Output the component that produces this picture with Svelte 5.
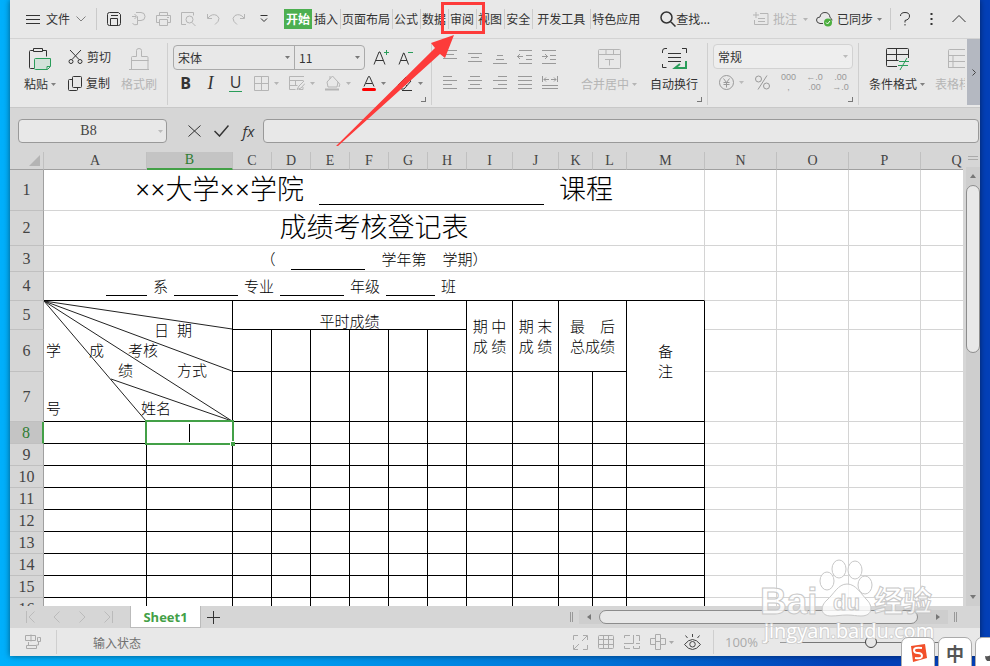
<script>
	let font = '宋体';
	let size = '11';
	let format = '常规';
	let cell = 'B8';
	let formula = '';
	let zoom = 50;

	const tabs = ['插入', '页面布局', '公式', '数据', '审阅', '视图', '安全', '开发工具', '特色应用'];

	const cols = [
		['A', 103], ['B', 86], ['C', 39], ['D', 39], ['E', 39], ['F', 39], ['G', 39], ['H', 39],
		['I', 46], ['J', 46], ['K', 34], ['L', 34], ['M', 78], ['N', 72], ['O', 72], ['P', 72], ['Q', 72]
	];
	const formCols = cols.slice(0, 13);
	const restCols = cols.slice(13);
	const plainRows = [8, 9, 10, 11, 12, 13, 14, 15, 16];

	// w, h, d = main strokes, g = green strokes
	const icons = {
		menu: { w: 14, h: 11, d: 'M0 1.5h14M0 5.5h14M0 9.5h14' },
		chevron: { w: 10, h: 6, d: 'M.5 .5l4.5 4.5 4.5-4.5' },
		save: { w: 14, h: 14, d: 'M.5 2.5q0-2 2-2h9l2 2v9q0 2-2 2h-9q-2 0-2-2zM3.5 13.5v-7h7v7M4 3.5h7' },
		exportpdf: { w: 15, h: 14, d: 'M1 4.5h4M3.5 2l2.5 2.5L3.5 7M5 .5h5q4 0 4 4t-4 4H6.5v4q-3 1-5-1M6.5 8.5v-4' },
		print: { w: 15, h: 14, d: 'M3.5 3.5v-3h8v3M3.5 10.5h-3v-7h14v7h-3M3.5 7.5h8v6h-8zM11 5.5h2' },
		preview: { w: 15, h: 14, d: 'M5 12.5H.5V.5h12v3M8.5 4a3.5 3.5 0 1 1 0 7 3.5 3.5 0 0 1 0-7M11 10.5l3.5 3.5' },
		undo: { w: 13, h: 12, d: 'M.5 1v4.5H5M1 5q4-5 9-2.5 3.5 2.5 1 6L8 11.5' },
		redo: { w: 13, h: 12, d: 'M12.5 1v4.5H8M12 5q-4-5-9-2.5-3.5 2.5-1 6L5 11.5' },
		more: { w: 8, h: 8, d: 'M.5 .5h7M1 3.5l3 3 3-3' },
		search: { w: 16, h: 16, d: 'M6.5 1a5.5 5.5 0 1 1 0 11 5.5 5.5 0 0 1 0-11M10.5 10.5l5 5', s: 1.5 },
		note: { w: 16, h: 14, d: 'M3 0v6M0 3h6M7 1.5h8v11H1.5V8M5 6.5h7M5 9.5h7' },
		question: { w: 10, h: 14, d: 'M.5 4q0-3.5 4.5-3.5T9.5 4 5 8.5v2M5 12v1.5' },
		dots: { w: 3, h: 14, d: 'M1.5 1v2M1.5 6v2M1.5 11v2', s: 2 },
		up: { w: 14, h: 8, d: 'M.5 7L7 .5 13.5 7' },
		paste: {
			w: 22, h: 22, d: 'M4 2.5H1.5q-1 0-1 1v16q0 1 1 1H5M13 2.5h4.5v6M4.5 .5h9v3h-9z',
			g: 'M6.5 10.5h15v8l-3 3h-12q-1 0-1-1v-9q0-1 1-1M21 18.5h-3v3', f: '#d2e2d9'
		},
		cut: { w: 15, h: 14, d: 'M2 0l9 9.5M13 0L4 9.5M3 9.5a2 2 0 1 1 0 4 2 2 0 0 1 0-4M12 9.5a2 2 0 1 1 0 4 2 2 0 0 1 0-4' },
		copy: { w: 14, h: 15, d: 'M5.5 .5h7q1 0 1 1v9q0 1-1 1h-7q-1 0-1-1v-9q0-1 1-1M4 3.5H1.5q-1 0-1 1v9q0 1 1 1h7q1 0 1-1V12' },
		brush: { w: 21, h: 22, d: 'M2.5 21V9.5q0-1 1-1H7.5v-6q0-2 2.5-2t2.5 2v6h5.5q1 0 1 1V21.5M2.5 12.5h17M0 21.5h20' },
		grow: { w: 16, h: 15, d: 'M1 14.5L6 2h1l5 12.5M3 10.5h7', g: 'M11 2.5h5M13.5 0v5' },
		shrink: { w: 15, h: 15, d: 'M1 14.5L5.5 3h.5l4.5 11.5M3 10.5h6', g: 'M10 2.5h5' },
		border: { w: 15, h: 15, d: 'M.5 .5h14v14H.5zM7.5 .5v14M.5 7.5h14' },
		style: { w: 16, h: 15, d: 'M15 .5H.5v13h6M.5 4.5h14M.5 9.5h8M6.5 4.5v5M15 5l-5 5-2 3.5 4-1.5 4-4.500M10 13.5h4V11' },
		bucket: { w: 16, h: 16, d: 'M2 7l5.5-6 5.5 6-1 5H3zM5 4V1M13 7q3 2 1 5', u: 'M0 14.5h14' },
		fontcolor: { w: 14, h: 15, d: 'M2 10.5L6.5 .5h1l4.5 10M4 7.5h6', r: true },
		eraser: { w: 16, h: 15, d: 'M1 9l8-8 5 4-7 8H4zM5 5l5 5M5 14.5h10' },
		top: { w: 14, h: 14, d: 'M0 .5h14M3 4.5h8M0 8.5h14' },
		middle: { w: 14, h: 14, d: 'M0 3.5h14M3 7.5h8M0 11.5h14' },
		bottom: { w: 14, h: 14, d: 'M4 5.5h6M3 9.5h8M0 13.5h14' },
		outdent: { w: 15, h: 14, d: 'M2 .5h13M9 5.5h6M9 9.5h6M2 13.5h13M0 6.5h6M3 4L.5 6.5 3 9' },
		indent: { w: 15, h: 14, d: 'M0 .5h14M8 5.5h6M8 9.5h6M0 13.5h14M0 6.5h6M3 4l2.5 2.5L3 9' },
		left: { w: 14, h: 14, d: 'M0 .5h9M0 4.5h14M0 8.5h9M0 12.5h14' },
		center: { w: 14, h: 14, d: 'M2 .5h10M0 4.5h14M2 8.5h10M0 12.5h14' },
		right: { w: 14, h: 14, d: 'M5 .5h9M0 4.5h14M5 8.5h9M0 12.5h14' },
		justify: { w: 14, h: 14, d: 'M0 .5h14M0 4.5h14M0 8.5h14M0 12.5h14' },
		spread: { w: 16, h: 14, d: 'M.5 0v6M15.5 0v6M2 3.5h5M9 3.5h5M4 1.5l-2 2 2 2M12 1.5l2 2-2 2M0 9.5h16M0 12.5h16' },
		merge: { w: 23, h: 20, d: 'M1.5 .5h20q1 0 1 1v17q0 1-1 1h-20q-1 0-1-1v-17q0-1 1-1M.5 5.5h22M8 .5v5M15.5 .5v5M7 10.5h9M11.5 10.5v6' },
		wrap: { w: 25, h: 22, d: 'M.5 5V3q0-2.5 2.5-2.5h2M20 .5h4.5V5M.5 16v3.5h4M6 5.5h13M6 9.5h13M6 13.5h13', g: 'M24 13v7h-10M18 16l-5 4h6', gs: 2 },
		yen: { w: 15, h: 15, d: 'M7.5 .5a7 7 0 1 1 0 14 7 7 0 0 1 0-14M4.5 3.5l3 4 3-4M7.5 7.5v5M4.5 7.5h6M4.5 9.5h6' },
		percent: { w: 15, h: 15, d: 'M3.5 1a2.5 2.5 0 1 1 0 6 2.5 2.5 0 0 1 0-6M11.5 8a2.5 2.5 0 1 1 0 6 2.5 2.5 0 0 1 0-6M12 .5L3 14.5' },
		cond: { w: 23, h: 22, d: 'M11 18.5H1.5q-1 0-1-1v-16q0-1 1-1h20q1 0 1 1V10M.5 6.5h22M.5 12.5h12M10.5 .5v12', g: 'M13 13.5h10M12 17.5h10M21 10l-7 12' },
		tablefmt: { w: 23, h: 20, d: 'M.5 19V1.5q0-1 1-1h20v18H.5M.5 6.5h21M5 6.5v12M.5 12.5h21' },
		close: { w: 13, h: 12, d: 'M.5 .5L12.5 11.5M12.5 .5L.5 11.5' },
		check: { w: 15, h: 12, d: 'M.5 6L5.5 11 14.5 .5', s: 1.5 },
		first: { w: 9, h: 12, d: 'M.5 0v12M8.5 .5L3 6l5.5 5.5' },
		prev: { w: 7, h: 12, d: 'M6.5 .5L1 6l5.5 5.5' },
		next: { w: 7, h: 12, d: 'M.5 .5L6 6 .5 11.5' },
		last: { w: 9, h: 12, d: 'M8.5 0v12M.5 .5L6 6 .5 11.5' },
		plus: { w: 13, h: 13, d: 'M6.5 0v13M0 6.5h13' },
		macro: { w: 16, h: 16, d: 'M.5 1.5h10v5H.5zM6 .5v7M13.5 3.5h2v4h-3v-4zM13.5 8v3h-2M3.5 8v3M1.5 11.5h10v3h-10z' },
		full: { w: 15, h: 15, d: 'M.5 5V.5H5M10 .5h4.5V5M14.5 10v4.5H10M5 14.5H.5V10M9 6l5-5M6 9l-5 5' },
		grid: { w: 16, h: 14, d: 'M1.5 .5h13q1 0 1 1v11q0 1-1 1h-13q-1 0-1-1v-11q0-1 1-1M.5 4.5h15M.5 9.5h15M5.5 .5v13M10.5 .5v13' },
		pagebreak: { w: 16, h: 14, d: 'M.5 3V.5H6M9.5 0v8.5H0M12 .5h3.5V6M.5 11v2.5H6M9.5 11v2.5h6V11M12 8.5h4' },
		cross: { w: 16, h: 16, d: 'M5.5 .5h5v15h-5zM5.5 4.5h-5v6h5M10.5 4.5h5v6h-5M5.5 7.5h5' },
		eye: { w: 17, h: 16, d: 'M.5 10.5q4-5 8-5t8 5q-4 5-8 5t-8-5M8.5 7.5a2.5 2.5 0 1 1 0 5.500 2.5 2.5 0 0 1 0-5.500M8.5 0v3M1.5 1.5l2 2.5M15.5 1.5l-2 2.5' }
	};

	const navIcons = ['first', 'prev', 'next', 'last'];
	const alignTop = ['top', 'middle', 'bottom', 'outdent', 'indent'];
	const alignBottom = ['left', 'center', 'right', 'justify', 'spread'];
	const quick = ['exportpdf', 'print', 'preview', 'undo', 'redo'];
</script>

{#snippet icon(name)}
	{@const i = icons[name]}
	<svg class="icon" width={i.w} height={i.h} viewBox="0 0 {i.w} {i.h}" aria-hidden="true">
		<path d={i.d} stroke="currentColor" stroke-width={i.s || 1} fill="none" />
		{#if i.g}<path d={i.g} stroke="#2a9d5a" stroke-width={i.gs || 1} fill={i.f || 'none'} />{/if}
		{#if i.u}<path d={i.u} stroke="#b5b5b5" stroke-width="2" />{/if}
		{#if i.r}<path d="M1.5 13.5h11" stroke="#f00" stroke-width="3" stroke-linecap="round" />{/if}
	</svg>
{/snippet}

{#snippet caret()}
	<svg class="icon" width="5" height="3" viewBox="0 0 5 3" aria-hidden="true"><path d="M0 0h5L2.5 3z" fill="currentColor" /></svg>
{/snippet}

{#snippet rest()}
	{#each restCols as col}<td></td>{/each}
{/snippet}

<div class="desktop">
	<main class="window">
		<nav class="menubar">
			<button class="file">{@render icon('menu')}<span>文件</span><span class="dim">{@render icon('chevron')}</span></button>
			<i class="line"></i>
			<div class="quick">
				<button class="tool" aria-label="保存">{@render icon('save')}</button>
				{#each quick as name}
					<button class="tool off" aria-label={name}>{@render icon(name)}</button>
				{/each}
				<button class="tool" aria-label="more">{@render icon('more')}</button>
			</div>
			<div class="tabs">
				<button class="tab active">开始</button>
				{#each tabs as tab}
					<button class="tab" class:wide={tab === '开发工具'}>{tab}</button>
				{/each}
			</div>
			<button class="find">{@render icon('search')}查找...</button>
			<div class="account">
				<button class="off pair">{@render icon('note')}<span>批注</span>{@render caret()}</button>
				<button class="pair">
					<svg class="icon" width="17" height="15" viewBox="0 0 17 15" aria-hidden="true">
						<path d="M7 11.5H4Q.5 11 .5 8T4 5Q4.5 .5 9 .5t5 5q2 1 2 3" fill="none" stroke="#444" />
						<circle cx="12" cy="10.5" r="4" fill="#4caf3f" /><path d="M10 10.5l1.5 1.5 2.5-3" fill="none" stroke="#fff" />
					</svg>
					<span>已同步</span><span class="dim">{@render caret()}</span>
				</button>
				<i class="line"></i>
				<button class="tool" aria-label="帮助">{@render icon('question')}</button>
				<button class="tool" aria-label="选项">{@render icon('dots')}</button>
				<button class="tool" aria-label="收起">{@render icon('up')}</button>
			</div>
		</nav>

		<section class="ribbon">
			<div class="group clip">
				<button class="big"><span class="pic">{@render icon('paste')}</span><span class="cap">粘贴 <b class="dim">{@render caret()}</b></span></button>
				<div>
					<button class="small">{@render icon('cut')}剪切</button>
					<button class="small">{@render icon('copy')}复制</button>
				</div>
				<button class="big off"><span class="pic">{@render icon('brush')}</span><span class="cap">格式刷</span></button>
			</div>

			<div class="group font">
				<div class="row">
					<div class="combos">
						<label class="combo name"><select aria-label="字体" bind:value={font}><option>宋体</option></select>{@render caret()}</label>
						<label class="combo"><select aria-label="字号" bind:value={size}><option>11</option></select>{@render caret()}</label>
					</div>
					<button class="tool" aria-label="增大字号">{@render icon('grow')}</button>
					<button class="tool" aria-label="减小字号">{@render icon('shrink')}</button>
				</div>
				<div class="row">
					<button class="tool letter bold">B</button>
					<button class="tool letter italic">I</button>
					<button class="tool letter"><span class="under">U</span></button>
					<button class="drop off" aria-label="边框">{@render icon('border')}{@render caret()}</button>
					<button class="drop off" aria-label="样式">{@render icon('style')}{@render caret()}</button>
					<button class="drop off" aria-label="填充">{@render icon('bucket')}{@render caret()}</button>
					<button class="drop" aria-label="字体颜色">{@render icon('fontcolor')}<span class="dim">{@render caret()}</span></button>
					<button class="drop" aria-label="清除">{@render icon('eraser')}<span class="dim">{@render caret()}</span></button>
				</div>
				<i class="corner"></i>
			</div>

			<div class="group align">
				<div>
					<div class="row">
						{#each alignTop as name}<button class="tool grey" aria-label={name}>{@render icon(name)}</button>{/each}
					</div>
					<div class="row">
						{#each alignBottom as name}<button class="tool grey" aria-label={name}>{@render icon(name)}</button>{/each}
					</div>
				</div>
				<button class="big off"><span class="pic">{@render icon('merge')}</span><span class="cap">合并居中 {@render caret()}</span></button>
				<button class="big"><span class="pic">{@render icon('wrap')}</span><span class="cap">自动换行</span></button>
				<i class="corner"></i>
			</div>

			<div class="group number">
				<label class="combo format"><select aria-label="数字格式" bind:value={format}><option>常规</option></select><span class="faint">{@render caret()}</span></label>
				<div class="row">
					<button class="drop grey" aria-label="货币">{@render icon('yen')}<span class="faint">{@render caret()}</span></button>
					<button class="tool grey" aria-label="百分比">{@render icon('percent')}</button>
					<button class="tool grey digits"><span>000</span><span>,</span></button>
					<button class="tool grey digits"><span>←.0</span><span>.00</span></button>
					<button class="tool grey digits"><span>.00</span><span>→.0</span></button>
				</div>
				<i class="corner"></i>
			</div>

			<div class="group styles">
				<button class="big"><span class="pic">{@render icon('cond')}</span><span class="cap">条件格式 <b class="dim">{@render caret()}</b></span></button>
				<button class="big off"><span class="pic">{@render icon('tablefmt')}</span><span class="cap">表格样式</span></button>
			</div>
			<button class="scroll" aria-label="更多">
				<svg width="4" height="7" viewBox="0 0 4 7"><path d="M.5 .5l3 3-3 3" fill="none" stroke="#444" /></svg>
			</button>
		</section>

		<section class="formula">
			<label class="namebox"><input aria-label="名称框" bind:value={cell} />{@render caret()}</label>
			<div class="confirm">
				<button aria-label="取消">{@render icon('close')}</button>
				<button aria-label="确认">{@render icon('check')}</button>
				<button class="fx">fx</button>
			</div>
			<input class="bar" aria-label="编辑栏" bind:value={formula} />
		</section>

		<section class="sheet">
			<div class="cells">
				<table>
					<colgroup>
						<col class="rowhead" />
						{#each cols as col}<col style="width: {col[1]}px" />{/each}
					</colgroup>
					<thead>
						<tr>
							<th class="all"><svg width="11" height="11" viewBox="0 0 11 11"><path d="M11 0v11H0z" fill="#b4b4b4" /></svg></th>
							{#each cols as col}<th class:picked={col[0] === 'B'}>{col[0]}</th>{/each}
						</tr>
					</thead>
					<tbody>
						<tr class="r1">
							<th>1</th>
							<td colspan="13"><div class="title"><span>××大学××学院</span><i class="blank xl"></i><span>课程</span></div></td>
							{@render rest()}
						</tr>
						<tr class="r2">
							<th>2</th>
							<td colspan="13"><div class="title">成绩考核登记表</div></td>
							{@render rest()}
						</tr>
						<tr class="r3">
							<th>3</th>
							<td colspan="13"><div class="term"><span>（</span><i class="blank l"></i><span>学年第</span><span>学期）</span></div></td>
							{@render rest()}
						</tr>
						<tr class="r4">
							<th>4</th>
							<td colspan="13"><div class="class"><i class="blank s"></i>系<i class="blank m"></i>专业<i class="blank m"></i>年级<i class="blank n"></i>班</div></td>
							{@render rest()}
						</tr>
						<tr class="r5">
							<th>5</th>
							<td class="ink split" colspan="2" rowspan="3">
								<svg width="188" height="120" viewBox="0 0 188 120">
									<path d="M0 0L188 28M0 0L188 70M0 0L188 120M0 0L102 120M67 78L188 120" fill="none" stroke="#222" />
									<text x="110" y="35">日</text><text x="133" y="35">期</text>
									<text x="2" y="55">学</text><text x="2" y="113">号</text>
									<text x="45" y="55">成</text><text x="74" y="75">绩</text>
									<text x="84" y="55">考核</text><text x="133" y="75">方式</text>
									<text x="97" y="113">姓名</text>
								</svg>
							</td>
							<td class="ink low" colspan="6">平时成绩</td>
							<td class="ink" rowspan="2">期 中<br />成 绩</td>
							<td class="ink" rowspan="2">期 末<br />成 绩</td>
							<td class="ink" colspan="2" rowspan="2">最&emsp;后<br />总成绩</td>
							<td class="ink" rowspan="3">备<br />注</td>
							{@render rest()}
						</tr>
						<tr class="r6">
							<th>6</th>
							{#each Array(6) as _}<td class="ink"></td>{/each}
							{@render rest()}
						</tr>
						<tr class="r7">
							<th>7</th>
							{#each Array(10) as _}<td class="ink"></td>{/each}
							{@render rest()}
						</tr>
						{#each plainRows as n}
							<tr class="plain">
								<th class:picked={n === 8}>{n}</th>
								{#each formCols as col}
									<td class="ink">
										{#if col[0] + n === cell}<div class="cursor"><i></i></div>{/if}
									</td>
								{/each}
								{@render rest()}
							</tr>
						{/each}
					</tbody>
				</table>
			</div>
			<div class="vscroll">
				<i class="handle"></i>
				<div class="vtrack">
					<button aria-label="向上"><svg width="6" height="4" viewBox="0 0 6 4"><path d="M3 0l3 4H0z" fill="#777" /></svg></button>
					<i class="thumb"></i>
					<button aria-label="向下"><svg width="6" height="4" viewBox="0 0 6 4"><path d="M0 0h6L3 4z" fill="#777" /></svg></button>
				</div>
			</div>
		</section>

		<section class="sheets">
			<div class="nav">
				{#each navIcons as name}<button aria-label={name}>{@render icon(name)}</button>{/each}
			</div>
			<button class="sheettab">Sheet1</button>
			<button class="add" aria-label="新建">{@render icon('plus')}</button>
			<div class="hscroll">
				<i class="grip"></i>
				<div class="htrack">
					<button aria-label="向左"><svg width="4" height="6" viewBox="0 0 4 6"><path d="M4 0v6L0 3z" fill="#777" /></svg></button>
					<i class="thumb"></i>
					<button aria-label="向右"><svg width="4" height="6" viewBox="0 0 4 6"><path d="M0 0v6l4-3z" fill="#777" /></svg></button>
				</div>
				<i class="grip"></i>
			</div>
		</section>

		<footer class="status">
			<button class="macro" aria-label="宏">{@render icon('macro')}</button>
			<span class="state">输入状态</span>
			<div class="views">
				<button aria-label="全屏">{@render icon('full')}</button>
				<button aria-label="普通">{@render icon('grid')}</button>
				<button aria-label="分页">{@render icon('pagebreak')}</button>
				<button class="with" aria-label="阅读">{@render icon('cross')}{@render caret()}</button>
				<button class="eye" aria-label="护眼">{@render icon('eye')}</button>
			</div>
			<div class="zoom">
				<button class="percent">100% {@render caret()}</button>
				<button aria-label="缩小"><i class="minus"></i></button>
				<input type="range" aria-label="缩放" bind:value={zoom} />
				<button aria-label="放大"><i class="minus"></i></button>
			</div>
		</footer>
	</main>

	<!-- tutorial markup over the window -->
	<svg class="arrow" width="160" height="150" viewBox="0 0 160 150">
		<path d="M112.5 3.5h41v29h-41z" fill="none" stroke="#fd3b3a" stroke-width="3" />
		<path d="M124 35L101 43l4 5L6 146l2 0L110 54l5 4z" fill="#fd3b3a" />
	</svg>

	<svg class="watermark" width="180" height="86" viewBox="0 0 180 86">
		<g class="paw">
			<ellipse cx="67" cy="21" rx="7" ry="9" />
			<ellipse cx="79" cy="9" rx="7" ry="9" />
			<ellipse cx="95" cy="10" rx="7" ry="9" />
			<ellipse cx="105" cy="25" rx="7" ry="9" />
			<path d="M87 24c-9 0-13 10-20 16s-7 16 4 16c6 0 10-1 16-1s9 1 14 1c12 0 12-10 6-16S96 24 87 24z" />
		</g>
		<text class="brand" x="0" y="54">Bai</text>
		<text class="du" x="73" y="50">du</text>
		<text class="brand cn" x="114" y="52">经验</text>
		<text class="site" x="4" y="78">jingyan.baidu.com</text>
	</svg>

	<div class="ime">
		<span><svg width="20" height="20" viewBox="0 0 20 20"><path d="M3 3l14-2 2 14-14 4z" fill="#f2502a" /><path d="M14 5q-8-1-8 2t4 3 4 3-7 2" fill="none" stroke="#fff" stroke-width="2" /></svg></span>
		<span>中</span>
		<span><svg width="16" height="16" viewBox="0 0 16 16"><path d="M9 1a7 7 0 0 1-8 10 7 7 0 0 0 14 0z" fill="#555" /></svg></span>
	</div>
</div>

<style>
	:global(body) {
		background: #0078e0;
	}

	.desktop {
		position: relative;
		height: 100vh;
		overflow: hidden;
		padding: 0 10px 10px;
		box-sizing: border-box;
		background: linear-gradient(90deg, #00b0fc 0%, #009cf0 30%, #0074d8 60%, #0340b8 85%, #0340b8 100%);
		font-family: "Noto Sans CJK SC", sans-serif;
		font-size: 12px;
		color: #333;
	}

	.window {
		display: flex;
		flex-direction: column;
		height: 100%;
		background: #e8e8e8;
		box-shadow: 0 0 6px rgba(0, 0, 0, 0.5);
	}

	button {
		display: flex;
		align-items: center;
		justify-content: center;
		flex: none;
		border: 0;
		padding: 0;
		background: none;
		font: inherit;
		line-height: 16px;
		color: inherit;
		white-space: nowrap;
	}

	input, select {
		min-width: 0;
		font: inherit;
		color: inherit;
	}

	.icon { flex: none; }
	button.off, .off { color: #b5b5b5; }
	.grey { color: #999; }
	.dim { color: #808080; display: inline-flex; }
	.faint { color: #bbb; display: inline-flex; }

	/* menu */
	.menubar {
		display: flex;
		align-items: center;
		height: 38px;
		border-bottom: 1px solid #d3d3d3;
	}

	.file { gap: 6px; margin: 0 10px 0 16px; }
	.line { width: 1px; height: 22px; background: #cacaca; flex: none; }
	.quick { display: flex; margin: 0 8px 0 4px; }
	.tool { width: 25px; height: 26px; }
	.tabs { display: flex; }

	.tab {
		height: 20px;
		padding: 0 2px 0 1px;
		border-right: 1px solid #ccc;
	}

	.tab.wide { padding: 0 5px 0 4px; }
	.tab:last-child { border: 0; }

	.tab.active {
		padding: 0 2px;
		border: 0;
		margin-right: 1px;
		background: #4caf50;
		color: #fff;
		font-weight: bold;
	}

	.find { margin-left: 18px; }
	.account { display: flex; align-items: center; margin-left: auto; padding-right: 8px; }
	.account .tool { width: 27px; }
	.pair { gap: 4px; margin-right: 8px; }
	.pair span + :global(svg) { margin-left: 2px; }

	/* ribbon */
	.ribbon {
		display: flex;
		align-items: flex-start;
		height: 68px;
		border-bottom: 1px solid #c8c8c8;
	}

	.group {
		position: relative;
		display: flex;
		flex: none;
		box-sizing: border-box;
		height: 62px;
		margin-top: 4px;
		padding: 1px 5px;
		border-right: 1px solid #cfcfcf;
	}

	.clip { gap: 10px; padding: 1px 10px 1px 12px; }
	.font { flex-direction: column; width: 264px; }
	.row { display: flex; height: 26px; align-items: center; }
	.big { flex-direction: column; justify-content: flex-start; min-width: 36px; }
	.pic { display: flex; align-items: center; height: 30px; }
	.cap { display: flex; align-items: center; gap: 3px; height: 20px; }
	.small { gap: 4px; height: 26px; }

	.combos {
		display: flex;
		box-sizing: border-box;
		width: 192px;
		height: 25px;
		margin-right: 3px;
		border: 1px solid #aaa;
		border-radius: 4px;
	}

	.combo { display: flex; align-items: center; flex: 1; padding: 0 4px; color: #777; }
	.combo.name { flex: none; width: 112px; border-right: 1px solid #aaa; }

	.combo select {
		flex: 1;
		border: 0;
		padding: 0;
		appearance: none;
		background: none;
		color: #333;
	}

	.combo.format {
		flex: none;
		box-sizing: border-box;
		width: 140px;
		height: 25px;
		border: 1px solid #d2d2d2;
		border-radius: 4px;
		background: #eee;
	}

	.letter { font-family: "Open Sans", sans-serif; font-size: 16px; }
	.bold { font-weight: bold; }
	.italic { font-family: "Liberation Serif", serif; font-size: 18px; font-style: italic; }
	.under { border-bottom: 1px solid #2a9d5a; line-height: 17px; padding: 0 1px; }
	.drop { gap: 5px; width: 36px; height: 26px; }

	.corner {
		position: absolute;
		right: 5px;
		bottom: 3px;
		width: 4px;
		height: 4px;
		border: solid #777;
		border-width: 0 1px 1px 0;
	}

	.align .big:nth-of-type(1) { margin: 0 13px 0 19px; }
	.align { padding-right: 9px; }
	.number { flex-direction: column; }
	.number .row { gap: 1px; }
	.digits { flex-direction: column; font-family: "Liberation Sans", sans-serif; font-size: 9px; line-height: 10px; }
	.styles { flex: 1; gap: 10px; padding-left: 10px; border: 0; overflow: hidden; min-width: 0; margin-right: 2px; }
	.scroll { width: 13px; height: 66px; background: #b4b8c1; }

	/* formula bar */
	.formula {
		display: flex;
		align-items: center;
		box-sizing: border-box;
		height: 44px;
		flex: none;
		padding: 2px 1px 0 8px;
		background: #d6d6d6;
	}

	.namebox, .bar {
		box-sizing: border-box;
		height: 24px;
		border: 1px solid #999;
		border-radius: 4px;
		background: #e8e8e8;
	}

	.namebox { display: flex; align-items: center; width: 149px; padding-right: 3px; color: #bbb; }

	.namebox input {
		flex: 1;
		border: 0;
		background: none;
		text-align: center;
		font-family: "Liberation Serif", serif;
		font-size: 14px;
		color: #444;
	}

	.bar { flex: 1; }
	.confirm { display: flex; margin: 0 1px 0 14px; }
	.confirm button { width: 27px; }
	.confirm .fx { font: italic 15px "Open Sans", sans-serif; }

	/* grid */
	.sheet { display: flex; flex: 1; min-height: 0; background: #d6d6d6; }
	.cells { flex: 1; min-width: 0; overflow: hidden; background: #fff; }

	table {
		width: 0;
		table-layout: fixed;
		border-collapse: separate;
		border-spacing: 0;
	}

	.rowhead { width: 34px; }

	th, td {
		box-sizing: border-box;
		padding: 0;
		border: solid #d4d4d4;
		border-width: 0 1px 1px 0;
		text-align: center;
	}

	th {
		background: #d6d6d6;
		border-color: #c0c0c0;
		font: 16px/16px "Liberation Serif", serif;
		color: #444;
	}

	thead th { height: 18px; border-bottom-color: #a0a0a0; font-size: 14px; }
	tbody th { border-right-color: #a0a0a0; }
	.all { text-align: right; padding-right: 3px; }
	.all svg { display: block; margin-left: auto; }
	th.picked { background: #c4c4c4; color: #2e7d32; }
	thead th.picked { border-bottom: 2px solid #43a047; }
	tbody th.picked { border-right: 2px solid #43a047; }

	td { font-size: 15px; line-height: 20px; color: #000; font-weight: 300; }
	td.ink { border-color: #000; }
	.r4 td:nth-child(2) { border-bottom-color: #000; }
	.r1 { height: 41px; }
	.r2 { height: 35px; }
	.r3 { height: 26px; }
	.r4, .r5 { height: 29px; }
	.r6 { height: 42px; }
	.r7 { height: 50px; }
	.plain { height: 22px; }
	.low { vertical-align: bottom; line-height: 17px; }

	.title {
		display: flex;
		justify-content: center;
		gap: 15px;
		font-family: "Liberation Serif", "Noto Sans CJK SC", serif;
		font-size: 27px;
		line-height: 34px;
	}

	.term, .class { display: flex; justify-content: center; line-height: 22px; }
	.term { gap: 16px; }
	.class { gap: 6px; justify-content: flex-start; padding-left: 62px; line-height: 24px; }
	.blank { align-self: flex-end; height: 1px; background: #000; margin-bottom: 2px; }
	.term .blank { margin-bottom: 0; }
	.xl { width: 225px; }
	.l { width: 74px; }
	.m { width: 64px; }
	.n { width: 49px; }
	.s { width: 41px; }
	.split svg { display: block; }
	.split text { font-size: 15px; }

	.plain td { position: relative; }

	.cursor {
		position: absolute;
		inset: -2px;
		z-index: 1;
		display: flex;
		align-items: center;
		justify-content: center;
		border: 2px solid #43a047;
	}

	.cursor i { width: 1px; height: 18px; background: #000; }

	.cursor::after {
		content: "";
		position: absolute;
		right: -3px;
		bottom: -3px;
		width: 4px;
		height: 4px;
		background: #43a047;
		border: solid #fff;
		border-width: 1px 0 0 1px;
	}

	/* scrollbars */
	.vscroll { display: flex; flex-direction: column; width: 14px; padding-left: 3px; }
	.handle { height: 2px; margin: 4px 2px 7px; border: solid #aaa; border-width: 1px 0; }
	.vtrack { flex: 1; display: flex; flex-direction: column; background: #cecece; }
	.vtrack button { height: 18px; }
	.vtrack button:last-child { margin-top: auto; }
	.thumb { box-sizing: border-box; border: 1px solid #8c8c8c; border-radius: 7px; background: #e8e8e8; }
	.vtrack .thumb { height: 168px; }

	.sheets { display: flex; height: 22px; flex: none; background: #d6d6d6; }
	.nav { display: flex; padding: 0 9px 0 7px; color: #bbb; }
	.nav button { width: 26px; }

	.sheettab {
		box-sizing: border-box;
		width: 71px;
		background: #fff;
		border: solid #bbb;
		border-width: 0 1px 1px;
		font: bold 13px "Open Sans", sans-serif;
		color: #43a047;
	}

	.add { width: 25px; }
	.hscroll { display: flex; align-items: center; width: 410px; margin-left: auto; }
	.grip { width: 1px; height: 10px; border: solid #999; border-width: 0 1px; }
	.hscroll .grip:last-child { margin-right: 23px; }
	.htrack { display: flex; flex: 1; height: 14px; margin: 0 6px; background: #cecece; }
	.htrack button { width: 20px; }
	.htrack .thumb { flex: 1; margin-right: 10px; }

	/* status */
	.status { display: flex; align-items: center; height: 28px; flex: none; color: #aaa; }
	.macro { width: 47px; height: 24px; border-right: 1px solid #cfcfcf; }
	.state { margin-left: 36px; color: #707070; }
	.views { display: flex; align-items: center; gap: 10px; margin-left: auto; padding-right: 12px; border-right: 1px solid #cfcfcf; height: 24px; }
	.with { gap: 3px; }
	.eye { color: #444; }
	.zoom { display: flex; align-items: center; gap: 11px; padding: 0 18px 0 11px; }
	.percent { gap: 6px; font: 13px "Open Sans", sans-serif; }
	.minus { width: 9px; height: 1px; background: #999; }
	.zoom input { width: 142px; height: 14px; margin: 0; appearance: none; background: linear-gradient(#777, #777) center / 100% 1px no-repeat; }

	.zoom input::-webkit-slider-thumb {
		appearance: none;
		width: 12px;
		height: 12px;
		border: 1px solid #444;
		border-radius: 50%;
		background: #e8e8e8;
	}

	/* overlays */
	.arrow { position: absolute; left: 330px; top: 0; }
	.watermark { position: absolute; right: 50px; bottom: 20px; overflow: visible; }

	.watermark text, .paw {
		fill: #fff;
		fill-opacity: 0.8;
		stroke: #c8c8c8;
		stroke-width: 1px;
	}

	.brand { font: bold 37px "Liberation Sans", sans-serif; }
	.brand.cn { font: bold 29px "Noto Sans CJK SC", sans-serif; }
	.du { font: bold 22px "Liberation Sans", sans-serif; }

	.watermark .site {
		font: 20px "Open Sans", sans-serif;
		fill-opacity: 1;
		stroke-width: 2px;
		stroke: #d0d0d0;
		paint-order: stroke;
	}

	.ime { position: absolute; left: calc(100% - 89px); bottom: -8px; display: flex; gap: 3px; }

	.ime span {
		display: flex;
		align-items: center;
		justify-content: center;
		box-sizing: border-box;
		width: 34px;
		height: 37px;
		padding-bottom: 5px;
		border: 1px solid #aaa;
		border-radius: 7px;
		background: #fff;
		font-size: 18px;
		line-height: 20px;
		font-weight: bold;
		color: #555;
	}
</style>
